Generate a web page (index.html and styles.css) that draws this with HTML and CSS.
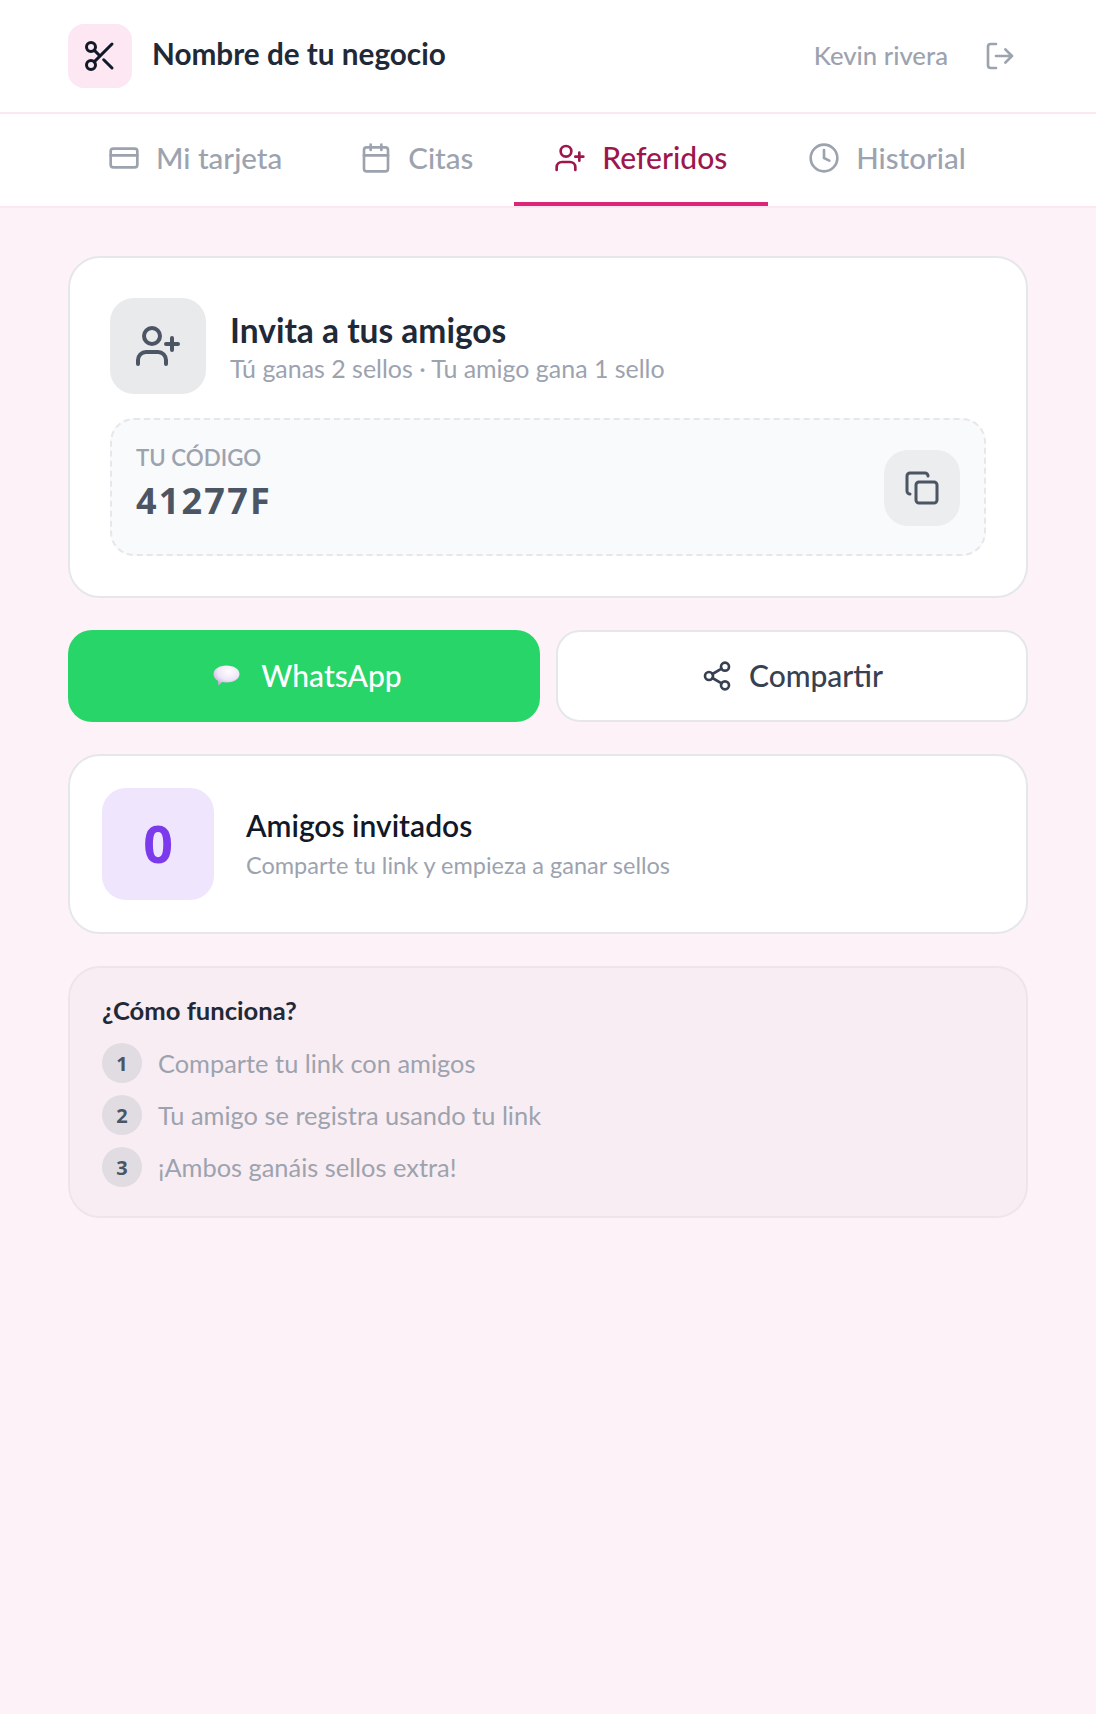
FILE: index.html
```html
<!DOCTYPE html>
<html lang="es">
<head>
<meta charset="utf-8">
<title>Referidos</title>
<link rel="stylesheet" href="styles.css">
</head>
<body>
<header class="topbar">
  <div class="brand">
    <div class="brand-icon">
      <svg class="ico i36" viewBox="0 0 24 24"><circle cx="6" cy="6" r="3"/><circle cx="6" cy="18" r="3"/><path d="M20 4 8.120 15.880M14.470 14.480 20 20M8.120 8.120 12 12"/></svg>
    </div>
    <span class="brand-name">Nombre de tu negocio</span>
  </div>
  <div class="user">
    <span class="user-name">Kevin rivera</span>
    <svg class="ico i32" viewBox="0 0 24 24"><path d="M9 21H5a2 2 0 0 1-2-2V5a2 2 0 0 1 2-2h4M16 17l5-5-5-5M21 12H9"/></svg>
  </div>
</header>
<nav class="tabs">
  <a class="tab tab-card">
    <svg class="ico i32" viewBox="0 0 24 24"><rect x="2" y="5" width="20" height="14" rx="2"/><path d="M2 10h20"/></svg>
    <span>Mi tarjeta</span>
  </a>
  <a class="tab tab-dates">
    <svg class="ico i32" viewBox="0 0 24 24"><path d="M8 2v4M16 2v4"/><rect x="3" y="4" width="18" height="18" rx="2"/><path d="M3 10h18"/></svg>
    <span>Citas</span>
  </a>
  <a class="tab active">
    <svg class="ico i32" viewBox="0 0 24 24"><path d="M16 21v-2a4 4 0 0 0-4-4H6a4 4 0 0 0-4 4v2"/><circle cx="9" cy="7" r="4"/><path d="M19 8v6M22 11h-6"/></svg>
    <span>Referidos</span>
  </a>
  <a class="tab">
    <svg class="ico i32" viewBox="0 0 24 24"><circle cx="12" cy="12" r="10"/><path d="M12 6v6l4 2"/></svg>
    <span>Historial</span>
  </a>
</nav>
<main class="content">
  <section class="card invite">
    <div class="invite-head">
      <div class="invite-icon">
        <svg class="ico i48" viewBox="0 0 24 24"><path d="M16 21v-2a4 4 0 0 0-4-4H6a4 4 0 0 0-4 4v2"/><circle cx="9" cy="7" r="4"/><path d="M19 8v6M22 11h-6"/></svg>
      </div>
      <div>
        <h1 class="invite-title">Invita a tus amigos</h1>
        <p class="invite-sub">Tú ganas 2 sellos · Tu amigo gana 1 sello</p>
      </div>
    </div>
    <div class="code-box">
      <div>
        <div class="code-label">TU CÓDIGO</div>
        <div class="code-value">41277F</div>
      </div>
      <button class="copy-btn">
        <svg class="ico i36" viewBox="0 0 24 24"><rect x="8" y="8" width="14" height="14" rx="2"/><path d="M4 16c-1.100 0-2-.9-2-2V4c0-1.100.9-2 2-2h10c1.100 0 2 .9 2 2"/></svg>
      </button>
    </div>
  </section>
  <div class="actions">
    <button class="btn btn-green">
      <svg class="bubble" viewBox="0 0 28 24"><defs><radialGradient id="bg" cx="0.58" cy="0.3" r="0.75"><stop offset="0" stop-color="#fefdff"/><stop offset="0.55" stop-color="#efe6f7"/><stop offset="1" stop-color="#bda5d6"/></radialGradient></defs><path d="M14.500 1.500C21.500 1.500 27.500 5 27.500 10S21.500 18.500 14.500 18.500c-1.600 0-3.100-.2-4.500-.5-1.100 1.500-2.700 3-4 3.500.3-1.500.3-3.300-.1-4.800C3 15.200 1.500 12.800 1.500 10 1.500 5 7.500 1.500 14.500 1.500z" fill="url(#bg)"/></svg>
      <span>WhatsApp</span>
    </button>
    <button class="btn btn-white">
      <svg class="ico i32" viewBox="0 0 24 24"><circle cx="18" cy="5" r="3"/><circle cx="6" cy="12" r="3"/><circle cx="18" cy="19" r="3"/><path d="m8.590 13.510 6.830 3.980M15.410 6.510l-6.820 3.980"/></svg>
      <span>Compartir</span>
    </button>
  </div>
  <section class="card stats">
    <div class="stat-num"><span class="stat-digit">0</span></div>
    <div>
      <h2 class="stat-title">Amigos invitados</h2>
      <p class="stat-sub">Comparte tu link y empieza a ganar sellos</p>
    </div>
  </section>
  <section class="how">
    <h3 class="how-title">¿Cómo funciona?</h3>
    <ol class="steps">
      <li class="step"><span class="step-num">1</span><span>Comparte tu link con amigos</span></li>
      <li class="step"><span class="step-num">2</span><span>Tu amigo se registra usando tu link</span></li>
      <li class="step"><span class="step-num">3</span><span>¡Ambos ganáis sellos extra!</span></li>
    </ol>
  </section>
</main>
</body>
</html>
```
FILE: styles.css
```css
* { box-sizing: border-box; }
html, body { margin: 0; padding: 0; }
body {
  min-height: 1714px;
  background: #fdf2f8;
  font-family: "Lato", "Noto Sans", sans-serif;
  color: #1f2937;
}
h1, h2, h3, p, ol { margin: 0; padding: 0; }
.ico { fill: none; stroke: currentColor; stroke-width: 2; stroke-linecap: round; stroke-linejoin: round; flex: none; display: block; }
.i32 { width: 32px; height: 32px; }
.i36 { width: 36px; height: 36px; }
.i48 { width: 48px; height: 48px; }

.topbar {
  height: 114px;
  background: #fff;
  border-bottom: 2px solid #fce7f3;
  padding: 0 68px;
  display: flex;
  align-items: center;
  justify-content: space-between;
}
.brand { display: flex; align-items: center; gap: 20px; }
.brand-icon {
  width: 64px; height: 64px;
  border-radius: 16px;
  background: #fce7f3;
  color: #111827;
  display: flex; align-items: center; justify-content: center;
}
.brand-name { font-size: 29.700px; font-weight: 700; margin-top: -6px; }
.user { display: flex; align-items: center; gap: 36px; color: #9ca3af; padding-right: 12px; }
.user-name { font-size: 25.700px; font-weight: 500; margin-top: -3px; }

.tabs {
  height: 94px;
  background: #fff;
  border-bottom: 2px solid #fce7f3;
  display: flex;
  padding-left: 68px;
}
.tab {
  display: flex; align-items: center; gap: 16px;
  padding: 0 40px;
  height: 92px;
  font-size: 29.500px;
  font-weight: 500;
  color: #9ca3af;
  border-bottom: 4px solid transparent;
}
.tab span { margin-top: -2px; }
.tab-card { padding-right: 38px; }
.tab-dates { padding-right: 41px; }
.tab.active { color: #9d174d; border-bottom-color: #db2777; font-size: 30px; padding-right: 41px; }

.content { padding: 48px 68px; display: flex; flex-direction: column; gap: 32px; }
.card { background: #fff; border: 2px solid #e5e7eb; border-radius: 32px; }

.invite { padding: 40px; display: flex; flex-direction: column; gap: 24px; }
.invite-head { display: flex; align-items: center; gap: 24px; }
.invite-icon {
  width: 96px; height: 96px;
  border-radius: 24px;
  background: #e9eaec;
  color: #4b5563;
  display: flex; align-items: center; justify-content: center;
}
.invite-title { font-size: 33.500px; font-weight: 700; line-height: 38px; margin-bottom: 3px; }
.invite-sub { font-size: 24.950px; line-height: 32px; color: #9ca3af; margin-bottom: -3px; }
.code-box {
  height: 138px;
  border: 2px dashed #e5e7eb;
  border-radius: 24px;
  background: #f9fafb;
  padding: 0 24px;
  display: flex; align-items: center; justify-content: space-between;
}
.code-label { font-size: 22.300px; font-weight: 600; line-height: 28px; color: #9ca3af; }
.code-value { font-family: "Open Sans", sans-serif; font-size: 36px; font-weight: 700; line-height: 48px; letter-spacing: 2.200px; color: #4b5563; margin: 5px 0; }
.copy-btn {
  width: 76px; height: 76px;
  border: 0; border-radius: 24px;
  background: #ecedef;
  color: #4b5563;
  padding: 0;
  margin-top: 2px;
  display: flex; align-items: center; justify-content: center;
}

.actions { display: grid; grid-template-columns: 1fr 1fr; gap: 16px; }
.btn {
  height: 92px;
  border-radius: 24px;
  font-family: inherit;
  font-size: 30px;
  font-weight: 500;
  display: flex; align-items: center; justify-content: center; gap: 16px;
  padding: 0;
}
.btn span { margin-top: -2px; }
.btn-green { background: #28d569; border: 0; color: #fff; gap: 21px; padding-left: 6px; }
.btn-white { background: #fff; border: 2px solid #e5e7eb; color: #374151; }
.bubble { width: 28px; height: 24px; display: block; }

.stats { padding: 32px; display: flex; align-items: center; gap: 32px; }
.stat-num {
  width: 112px; height: 112px;
  border-radius: 24px;
  background: #efe5fd;
  color: #7c3aed;
  font-family: "Open Sans", sans-serif;
  font-size: 52px; font-weight: 700;
  display: flex; align-items: center; justify-content: center;
}
.stat-digit { margin-top: -4px; }
.stat-title { font-size: 30px; font-weight: 600; line-height: 36px; margin-bottom: 6px; color: #111827; }
.stat-sub { font-size: 23.500px; line-height: 32px; color: #9ca3af; }

.how {
  background: #f8edf2;
  border: 2px solid #eee5ea;
  border-radius: 32px;
  padding: 32px 32px 29px;
}
.how-title { font-size: 25.600px; font-weight: 700; line-height: 24px; color: #1f2937; margin: -2px 0 21px; }
.steps { list-style: none; display: flex; flex-direction: column; gap: 12px; }
.step { display: flex; align-items: center; gap: 16px; font-size: 25.400px; color: #9ca3af; }
.step-num {
  width: 40px; height: 40px;
  border-radius: 50%;
  background: #e0dce1;
  color: #4b5563;
  font-family: "Open Sans", sans-serif;
  font-size: 20px; font-weight: 700;
  display: flex; align-items: center; justify-content: center;
  flex: none;
}
```
